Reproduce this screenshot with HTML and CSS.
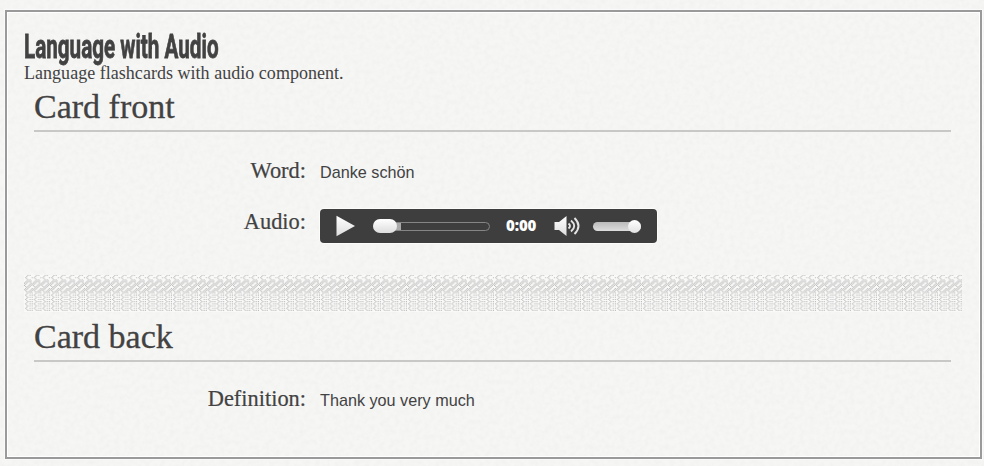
FILE: index.html
```html
<!DOCTYPE html>
<html lang="en">
<head>
<meta charset="utf-8">
<title>Language with Audio</title>
<link rel="stylesheet" href="styles.css">
</head>
<body>
<svg class="paper" aria-hidden="true">
  <filter id="grain"><feTurbulence type="fractalNoise" baseFrequency=".2" numOctaves="2"/><feColorMatrix values="0 0 0 0 0  0 0 0 0 0  0 0 0 0 0  .035 0 0 0 -.012"/></filter>
  <rect width="100%" height="100%" filter="url(#grain)"/>
</svg>
<main class="deck">
  <h1><span>Language with Audio</span></h1>
  <p class="summary"><span>Language flashcards with audio component.</span></p>
  <section class="card">
    <h2><span class="front">Card front</span></h2>
    <div class="row word"><span class="label">Word:</span><span class="value">Danke schön</span></div>
    <div class="row audio"><span class="label">Audio:</span>
      <div class="player">
        <svg class="play" width="20" height="22" viewBox="0 0 20 22"><path d="M.5.8 19 11 .5 21.2Z" fill="url(#shine)"/></svg>
        <div class="track"><i class="loaded"></i><i class="handle"></i></div>
        <span class="time">0:00</span>
        <svg class="speaker" width="27" height="22" viewBox="0 0 27 22"><path d="M.5 7h4.500l7.500-6v20L5 15H.5Z" fill="url(#shine)"/><g fill="none" stroke="#e4e4e4" stroke-width="1.9"><path d="M14.500 8.500q3 2.500 0 5"/><path d="M17 5.500q6.500 5.500 0 11"/><path d="M20.500 3q8 8 0 16"/></g></svg>
        <div class="volume"><i></i></div>
      </div>
    </div>
  </section>
  <svg class="divider" width="938" height="37">
    <defs>
      <linearGradient id="shine" x2="0" y2="1"><stop stop-color="#fff"/><stop offset="1" stop-color="#ddd"/></linearGradient>
      <pattern id="weave" width="8" height="34" patternUnits="userSpaceOnUse" patternTransform="scale(1.088)">
        <g stroke="#bcbcbc" stroke-width="1">
          <path d="M3 .5h1M2 1.500h1M1 2.500h1M2 3.500h1M3 4.500h1M5 .5h1M7 2.500h1M5 4.500h1"/>
          <path d="M2 5.500h1M4 5.500h1M6 5.500h1M1 6.500h1M3 6.500h1M5 6.500h1M0 7.500h1M2 7.500h1M6 7.500h1M1 8.500h1M5 8.500h1M7 8.500h1M0 9.500h1M4 9.500h1M6 9.500h1M1 10.500h1M3 10.500h1M5 10.500h1M2 11.500h1M4 11.500h1M1 12.500h1M3 12.500h1M7 12.500h1M0 13.500h1M2 13.500h1M6 13.500h1M1 14.500h1M5 14.500h1M7 14.500h1M2 15.500h1M4 15.500h1M6 15.500h1"/>
          <path d="M3 16.500h1M2 17.500h1M1 18.500h1M2 19.500h1M3 20.500h1M2 21.500h1M1 22.500h1M2 23.500h1M3 24.500h1M2 25.500h1M1 26.500h1M2 27.500h1M3 28.500h1M2 29.500h1M1 30.500h1M2 31.500h1M3 32.500h1"/>
          <path d="M5 16.500h1M7 16.500h1M5 18.500h1M7 18.500h1M5 20.500h1M7 20.500h1M5 22.500h1M7 22.500h1M5 24.500h1M7 24.500h1M5 26.500h1M7 26.500h1M5 28.500h1M7 28.500h1M5 30.500h1M7 30.500h1M5 32.500h1M7 32.500h1"/>
        </g>
      </pattern>
    </defs>
    <rect width="938" height="37" fill="#f9f9f8"/>
    <rect width="938" height="37" fill="url(#weave)"/>
  </svg>
  <section class="card">
    <h2><span class="back">Card back</span></h2>
    <div class="row definition"><span class="label">Definition:</span><span class="value">Thank you very much</span></div>
  </section>
</main>
</body>
</html>
```
FILE: styles.css
```css
* { box-sizing: border-box; }
html { background: #f6f6f5; }
body { margin: 0; padding: 10px 2px 7px 5px; height: 466px; overflow: hidden; color: #424242; }
.paper { position: absolute; inset: 0; width: 100%; height: 100%; z-index: -1; }
.deck { height: 449px; border: 2px solid #9a9a9a; box-shadow: inset 0 0 0 1px #fff, 0 0 0 1px #fafafa; padding: 18px 18px 0 17px; font-family: "Liberation Serif", serif; }
h1, h2, p { margin: 0; font-weight: normal; }
h1 { height: 33px; font: 700 34px/33px Roboto, sans-serif; white-space: nowrap; }
h1 span { display: inline-block; transform: scaleX(.607); transform-origin: left; -webkit-text-stroke: .8px #424242; }
.summary { height: 23px; font-size: 18px; line-height: 21px; letter-spacing: .03px; white-space: nowrap; }
.card { margin: 0 11px 0 10px; }
h2 { height: 46px; border-bottom: 2px solid #c8c8c7; font-size: 34px; line-height: 41px; -webkit-text-stroke: .3px #424242; }
.row { display: grid; grid-template-columns: 272px 1fr; column-gap: 14px; }
.label { text-align: right; font-size: 22.4px; line-height: 26px; -webkit-text-stroke: .2px #424242; }
.value { font: 16.2px/26px "Liberation Sans", sans-serif; padding-top: 1px; }
.word { margin-top: 26px; height: 51px; }
.audio { height: 66px; }
.audio .label { line-height: 25px; }
.player { width: 337px; height: 34px; display: flex; align-items: center; padding-left: 16px; border-radius: 4px; background: #3e3e3e; box-shadow: 0 0 0 1px #fcfcfb; }
.track { position: relative; margin-left: 17px; width: 117px; height: 9px; border: 1px solid #858585; border-radius: 5px; }
.loaded { position: absolute; left: 0; top: 0; width: 27px; height: 7px; background: #aaa; border-radius: 4px 0 0 4px; }
.handle { position: absolute; left: -1px; top: -4px; width: 24px; height: 14px; border-radius: 7px; background: linear-gradient(#fff, #ddd); }
.time { width: 32px; margin: -2px 0 0 16px; font: 800 15px/20px "Open Sans", sans-serif; letter-spacing: -.1px; color: #fff; }
.speaker { margin-left: 16px; }
.volume { position: relative; margin-left: 12px; width: 48px; height: 9px; border-radius: 5px; background: linear-gradient(#bbb, #ddd); }
.volume i { position: absolute; right: 0; top: -2px; width: 13px; height: 13px; border-radius: 50%; background: linear-gradient(#fff, #e2e2e2); }
.divider { display: block; }
.divider + .card h2 { height: 50px; line-height: 50px; }
.definition { margin-top: 24px; }
```
